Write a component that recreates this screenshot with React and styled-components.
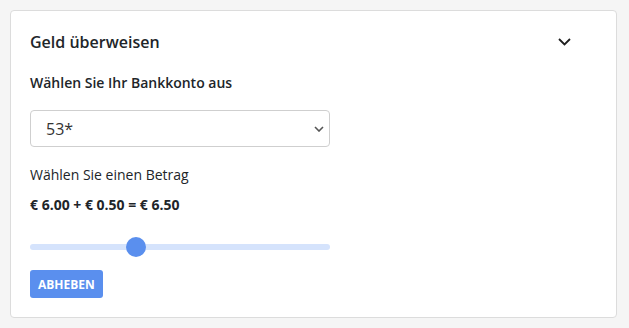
import React, { useState } from 'react';
import styled, { createGlobalStyle } from 'styled-components';

const GlobalStyle = createGlobalStyle`
  html, body {
    margin: 0;
    padding: 0;
    background: #f5f5f5;
    font-family: 'Open Sans', 'Liberation Sans', sans-serif;
    color: #212529;
  }
`;

const Page = styled.div`
  padding: 10px 12px 10px 10px;
`;

const Card = styled.section`
  background: #fff;
  border: 1px solid #dcdcdc;
  border-radius: 4px;
  padding: 17px 19px 20px 19px;
  height: 308px;
  box-sizing: border-box;
`;

const Header = styled.div`
  display: flex;
  align-items: center;
  justify-content: space-between;
  height: 28px;
  padding-right: 26px;
`;

const Title = styled.h2`
  margin: 0;
  font-size: 16px;
  font-weight: 600;
  line-height: 24px;
`;

const Toggle = styled.button`
  border: 0;
  background: none;
  padding: 0;
  display: flex;
  color: #1f1f1f;
  cursor: pointer;
`;

const Label = styled.div`
  margin-top: ${p => p.$gap}px;
  font-size: 14px;
  font-weight: ${p => (p.$bold ? 600 : 400)};
  line-height: 20px;
`;

const Select = styled.select`
  display: block;
  margin-top: 17px;
  width: 300px;
  height: 37px;
  padding: 0 30px 0 15px;
  font-family: inherit;
  font-size: 16px;
  color: #333;
  background: #fff url("data:image/svg+xml,%3Csvg xmlns='http://www.w3.org/2000/svg' width='10' height='6' viewBox='0 0 10 6'%3E%3Cpath d='M1 1l4 4 4-4' fill='none' stroke='%23555' stroke-width='1.6'/%3E%3C/svg%3E") no-repeat right 5px center;
  border: 1px solid #cfcfcf;
  border-radius: 4px;
  appearance: none;
  outline: none;
`;

const Amount = styled.div`
  margin-top: 11px;
  font-size: 14px;
  font-weight: 700;
  line-height: 18px;
`;

const Range = styled.input`
  display: block;
  margin: 23px 0 0;
  width: 300px;
  height: 20px;
  appearance: none;
  background: transparent;

  &::-webkit-slider-runnable-track {
    height: 6px;
    border-radius: 3px;
    background: #d5e3fc;
  }

  &::-webkit-slider-thumb {
    appearance: none;
    width: 20px;
    height: 20px;
    margin-top: -7px;
    border-radius: 50%;
    background: #5a8fee;
    border: 0;
  }
`;

const Button = styled.button`
  display: block;
  margin-top: 13px;
  height: 28px;
  padding: 0 8px;
  border: 0;
  border-radius: 3px;
  background: #5a8fee;
  color: #fff;
  font-family: inherit;
  font-size: 12px;
  font-weight: 700;
  cursor: pointer;
`;

const Chevron = () => (
  <svg width="13" height="8" viewBox="0 0 13 8" fill="none">
    <path d="M1 1l5.5 5.5L12 1" stroke="currentColor" strokeWidth="1.8" />
  </svg>
);

export default function App() {
  const [value, setValue] = useState(34.4);

  return (
    <Page>
      <GlobalStyle />
      <Card>
        <Header>
          <Title>Geld überweisen</Title>
          <Toggle aria-label="Einklappen">
            <Chevron />
          </Toggle>
        </Header>
        <Label $bold $gap={17}>Wählen Sie Ihr Bankkonto aus</Label>
        <Select defaultValue="53">
          <option value="53">53*</option>
        </Select>
        <Label $gap={18}>Wählen Sie einen Betrag</Label>
        <Amount>€ 6.00 + € 0.50 = € 6.50</Amount>
        <Range
          type="range"
          min="0"
          max="100"
          step="0.1"
          value={value}
          onChange={e => setValue(Number(e.target.value))}
        />
        <Button>ABHEBEN</Button>
      </Card>
    </Page>
  );
}
